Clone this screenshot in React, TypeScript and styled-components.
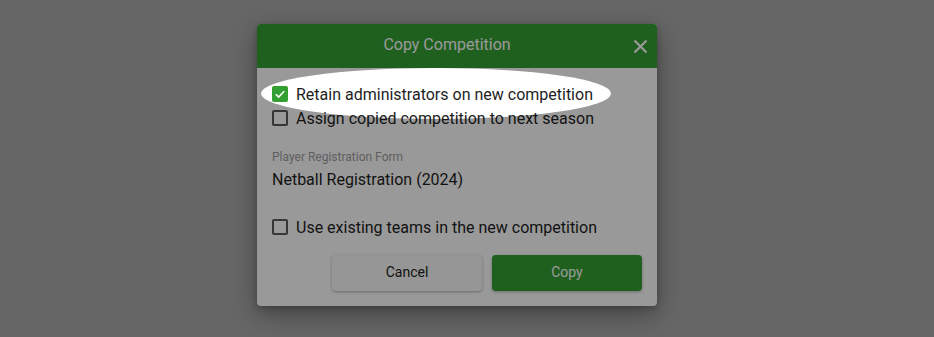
import React from 'react';
import styled, { createGlobalStyle } from 'styled-components';

const GlobalStyle = createGlobalStyle`
	html, body {
		margin: 0;
		padding: 0;
		background: #aaaaaa;
		font-family: Roboto, 'Liberation Sans', sans-serif;
		overflow: hidden;
	}
`;

const GREEN = '#34a034';

const Page = styled.div`
	width: 934px;
	height: 337px;
	display: flex;
	justify-content: center;
	align-items: flex-start;
	padding-top: 24px;
	padding-right: 20px;
	box-sizing: border-box;
`;

const Dialog = styled.div`
	width: 400px;
	background: #ffffff;
	border-radius: 4px;
	box-shadow: 0 8px 24px rgba(0, 0, 0, 0.35), 0 2px 6px rgba(0, 0, 0, 0.2);
`;

const Header = styled.div`
	position: relative;
	height: 44px;
	display: flex;
	align-items: center;
	background: ${GREEN};
	border-radius: 4px 4px 0 0;
	color: #ffffff;
`;

const Title = styled.div`
	flex: 1;
	padding: 0 20px 3px 0;
	text-align: center;
	font-size: 16px;
	line-height: 20px;
`;

const CloseButton = styled.button`
	position: absolute;
	right: 9px;
	top: 14px;
	width: 16px;
	height: 16px;
	padding: 0;
	border: none;
	background: transparent;
	display: flex;
	align-items: center;
	justify-content: center;
	cursor: pointer;
`;

const Body = styled.div`
	padding: 14px 15px 15px 15px;
`;

const Row = styled.label<{ $top?: number }>`
	position: relative;
	display: flex;
	align-items: center;
	gap: 8px;
	height: 24px;
	font-size: 16px;
	color: #1e1e1e;
	margin-top: ${(p) => p.$top ?? 0}px;
`;

const Box = styled.span<{ $checked?: boolean }>`
	width: 16px;
	height: 16px;
	box-sizing: border-box;
	border-radius: 2px;
	display: flex;
	align-items: center;
	justify-content: center;
	flex-shrink: 0;
	background: ${(p) => (p.$checked ? GREEN : '#ffffff')};
	border: ${(p) => (p.$checked ? 'none' : '2px solid #5a5a5a')};
`;

const Spotlight = styled.span`
	position: absolute;
	left: -11px;
	top: -14px;
	width: 350px;
	height: 51px;
	border-radius: 50%;
	box-shadow: 0 0 0 3000px rgba(0, 0, 0, 0.4);
	pointer-events: none;
	z-index: 10;
`;

const Field = styled.div`
	margin-top: 20px;
`;

const FieldLabel = styled.div`
	font-size: 12px;
	line-height: 14px;
	color: #9e9e9e;
`;

const FieldValue = styled.div`
	margin-top: 6px;
	font-size: 16px;
	line-height: 20px;
	color: #1e1e1e;
`;

const Actions = styled.div`
	display: flex;
	justify-content: flex-end;
	gap: 10px;
	margin-top: 16px;
`;

const ActionButton = styled.button<{ $primary?: boolean }>`
	width: 150px;
	height: 36px;
	padding: 0 0 2px;
	border: none;
	border-radius: 4px;
	font-family: inherit;
	font-size: 14px;
	background: ${(p) => (p.$primary ? GREEN : '#fbfbfb')};
	color: ${(p) => (p.$primary ? '#ffffff' : '#212121')};
	box-shadow: 0 1px 3px rgba(0, 0, 0, 0.3);
	cursor: pointer;
`;

const Check = () => (
	<svg width="12" height="12" viewBox="0 0 12 12">
		<path d="M1.8 6.2 L4.6 9 L10.2 3.2" fill="none" stroke="#ffffff" strokeWidth="1.6" />
	</svg>
);

const Checkbox = ({ checked, label, top, spot }: { checked?: boolean; label: string; top?: number; spot?: boolean }) => (
	<Row $top={top}>
		<Box $checked={checked}>{checked && <Check />}</Box>
		{label}
		{spot && <Spotlight />}
	</Row>
);

const App = () => {
	return (
		<>
			<GlobalStyle />
			<Page>
				<Dialog>
					<Header>
						<Title>Copy Competition</Title>
						<CloseButton aria-label="close">
							<svg width="15" height="15" viewBox="0 0 15 15">
								<path d="M1.5 1.5 L13.5 13.5 M13.5 1.5 L1.5 13.5" stroke="#ffffff" strokeWidth="2.2" />
							</svg>
						</CloseButton>
					</Header>
					<Body>
						<Checkbox checked spot label="Retain administrators on new competition" />
						<Checkbox label="Assign copied competition to next season" />
						<Field>
							<FieldLabel>Player Registration Form</FieldLabel>
							<FieldValue>Netball Registration (2024)</FieldValue>
						</Field>
						<Checkbox top={25} label="Use existing teams in the new competition" />
						<Actions>
							<ActionButton>Cancel</ActionButton>
							<ActionButton $primary>Copy</ActionButton>
						</Actions>
					</Body>
				</Dialog>
			</Page>
		</>
	);
};

export default App;
